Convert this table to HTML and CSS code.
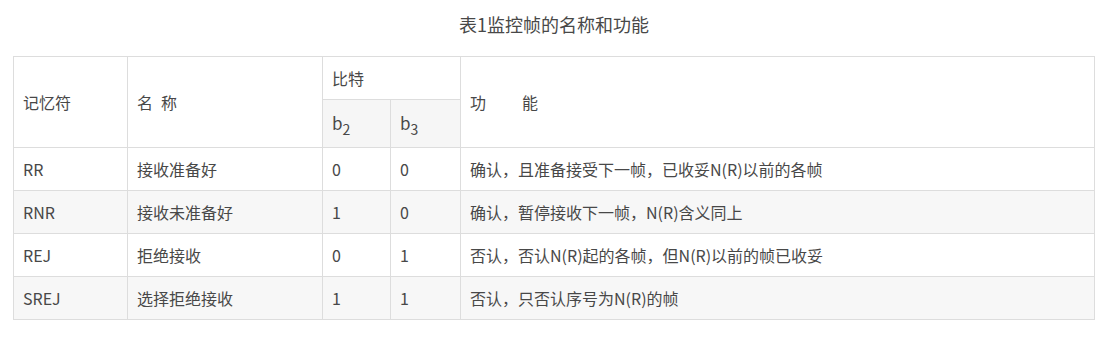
FILE: index.html
```html
<!DOCTYPE html>
<html lang="zh-CN">
<head>
<meta charset="utf-8">
<title>表1监控帧的名称和功能</title>
<link rel="stylesheet" href="styles.css">
</head>
<body>
<div class="doc">
  <p class="caption">表1监控帧的名称和功能</p>
  <table class="frames">
    <colgroup>
      <col class="c-mn">
      <col class="c-name">
      <col class="c-b2">
      <col class="c-b3">
      <col class="c-fn">
    </colgroup>
    <tbody>
      <tr class="head-top">
        <td rowspan="2">记忆符</td>
        <td rowspan="2">名&ensp;称</td>
        <td colspan="2">比特</td>
        <td rowspan="2">功&emsp;&emsp;&#8197;能</td>
      </tr>
      <tr class="head-bits">
        <td class="bit">b<sub>2</sub></td>
        <td class="bit">b<sub>3</sub></td>
      </tr>
      <tr>
        <td>RR</td>
        <td>接收准备好</td>
        <td>0</td>
        <td>0</td>
        <td>确认，且准备接受下一帧，已收妥N(R)以前的各帧</td>
      </tr>
      <tr class="alt">
        <td>RNR</td>
        <td>接收未准备好</td>
        <td>1</td>
        <td>0</td>
        <td>确认，暂停接收下一帧，N(R)含义同上</td>
      </tr>
      <tr>
        <td>REJ</td>
        <td>拒绝接收</td>
        <td>0</td>
        <td>1</td>
        <td>否认，否认N(R)起的各帧，但N(R)以前的帧已收妥</td>
      </tr>
      <tr class="alt">
        <td>SREJ</td>
        <td>选择拒绝接收</td>
        <td>1</td>
        <td>1</td>
        <td>否认，只否认序号为N(R)的帧</td>
      </tr>
    </tbody>
  </table>
</div>
</body>
</html>
```

FILE: styles.css
```css
html, body {
  margin: 0;
  padding: 0;
  background: #ffffff;
}

body {
  font-family: "Noto Sans CJK SC", "Noto Sans", sans-serif;
  color: #484848;
}

.doc {
  padding-left: 13px;
  width: 1082px;
}

.caption {
  margin: 0;
  padding-top: 12px;
  height: 56px;
  box-sizing: border-box;
  font-size: 18px;
  line-height: 24px;
  text-align: center;
}

.frames {
  width: 1082px;
  border-collapse: collapse;
  table-layout: fixed;
  font-size: 16px;
}

.c-mn { width: 114px; }
.c-name { width: 195px; }
.c-b2 { width: 68px; }
.c-b3 { width: 70px; }
.c-fn { width: auto; }

.frames td {
  border: 1px solid #dddddd;
  padding: 9px 9px;
  line-height: 24px;
  height: 24px;
  vertical-align: middle;
  text-align: left;
}

.frames .head-bits td {
  background: #f6f6f6;
  padding-top: 11px;
  padding-bottom: 12px;
  font-size: 17px;
}

.frames .bit sub {
  font-size: 14px;
  line-height: 0;
  vertical-align: -5px;
}

.frames .alt td {
  background: #f7f7f7;
}
```
